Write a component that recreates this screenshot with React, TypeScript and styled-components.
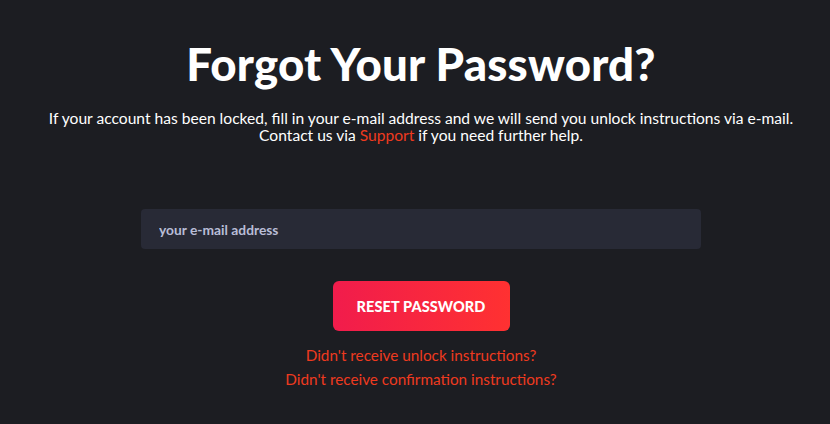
import { FC } from 'react';
import styled, { createGlobalStyle } from 'styled-components';

const GlobalStyle = createGlobalStyle`
  html, body {
    margin: 0;
    padding: 0;
    background: #1c1d22;
  }
  body {
    font-family: Lato, 'Noto Sans', sans-serif;
    color: #ffffff;
  }
`;

const Page = styled.main`
  min-height: 424px;
  box-sizing: border-box;
  padding: 37px 0 0 12px;
  display: flex;
  flex-direction: column;
  align-items: center;
`;

const Title = styled.h1`
  margin: 0;
  font-size: 45.6px;
  font-weight: 900;
  line-height: 54px;
  letter-spacing: 0.2px;
`;

const Intro = styled.p`
  margin: 19px 0 0;
  font-size: 15.6px;
  line-height: 17px;
  text-align: center;
`;

const Link = styled.a`
  color: #ee3a1f;
  text-decoration: none;
`;

const Form = styled.form`
  margin-top: 65px;
  display: flex;
  flex-direction: column;
  align-items: center;
`;

const EmailInput = styled.input`
  width: 560px;
  height: 40px;
  box-sizing: border-box;
  padding: 0 18px;
  border: none;
  border-radius: 4px;
  background: #282a36;
  color: #ffffff;
  font-family: Lato, 'Noto Sans', sans-serif;
  font-size: 13.8px;
  font-weight: 700;
  outline: none;

  &::placeholder {
    color: #b8bdd6;
  }
`;

const SubmitButton = styled.button`
  margin-top: 32px;
  width: 177px;
  height: 50px;
  border: none;
  border-radius: 6px;
  background: linear-gradient(90deg, #f11c4c 0%, #ff3131 100%);
  color: #ffffff;
  font-family: Lato, 'Noto Sans', sans-serif;
  font-size: 14.5px;
  font-weight: 900;
  letter-spacing: 0.1px;
  cursor: pointer;
`;

const HelpLinks = styled.div`
  margin-top: 16px;
  display: flex;
  flex-direction: column;
  align-items: center;
  gap: 7px;
  font-size: 15.3px;
  line-height: 17px;
`;

const App: FC = () => (
  <Page>
    <GlobalStyle />
    <Title>Forgot Your Password?</Title>
    <Intro>
      If your account has been locked, fill in your e-mail address and we will send you unlock
      instructions via e-mail.
      <br />
      Contact us via <Link href="#">Support</Link> if you need further help.
    </Intro>
    <Form onSubmit={(e) => e.preventDefault()}>
      <EmailInput type="email" placeholder="your e-mail address" />
      <SubmitButton type="submit">RESET PASSWORD</SubmitButton>
      <HelpLinks>
        <Link href="#">Didn't receive unlock instructions?</Link>
        <Link href="#">Didn't receive confirmation instructions?</Link>
      </HelpLinks>
    </Form>
  </Page>
);

export default App;
